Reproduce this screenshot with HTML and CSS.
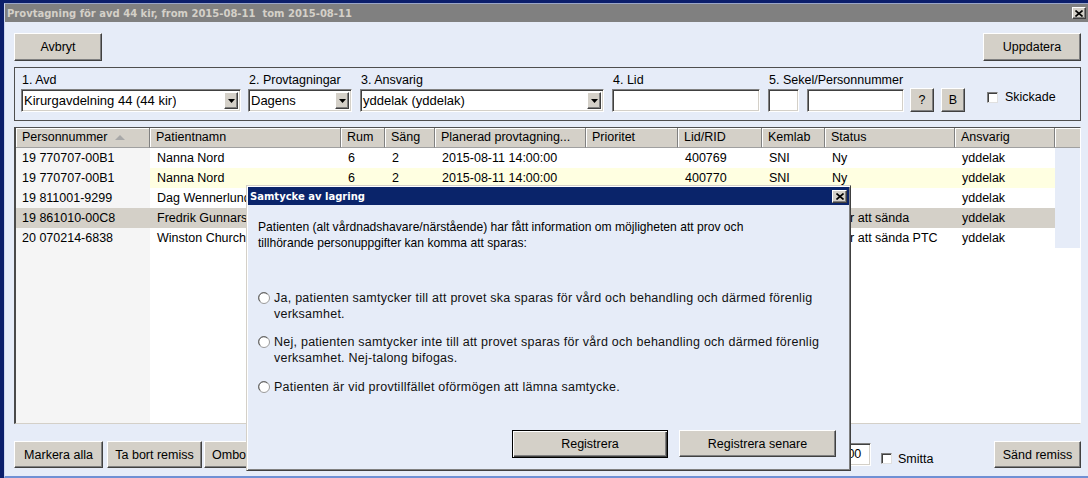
FILE: index.html
```html
<!DOCTYPE html>
<html lang="sv">
<head>
<meta charset="utf-8">
<title>Provtagning</title>
<link rel="stylesheet" href="styles.css">
</head>
<body>
<div class="window">
  <div class="titlebar">
    <span class="title">Provtagning för avd 44 kir, from 2015-08-11  tom 2015-08-11</span>
    <span class="xbtn"><svg width="8" height="7" viewBox="0 0 8 7"><path d="M0.5 0.5L7.5 6.5M7.5 0.5L0.5 6.5" stroke="#000" stroke-width="1.6"/></svg></span>
  </div>
  <div class="content">
    <div class="toolbar">
      <button class="btn btn-avbryt">Avbryt</button>
      <button class="btn btn-upd">Uppdatera</button>
    </div>

    <div class="filters">
      <div class="field f1">
        <div class="lbl">1. Avd</div>
        <div class="select sunken"><span class="val">Kirurgavdelning 44 (44 kir)</span><span class="arrow"><svg width="7" height="4" viewBox="0 0 7 4"><polygon points="0,0 7,0 3.5,4" fill="#000"/></svg></span></div>
      </div>
      <div class="field f2">
        <div class="lbl">2. Provtagningar</div>
        <div class="select sunken"><span class="val">Dagens</span><span class="arrow"><svg width="7" height="4" viewBox="0 0 7 4"><polygon points="0,0 7,0 3.5,4" fill="#000"/></svg></span></div>
      </div>
      <div class="field f3">
        <div class="lbl">3. Ansvarig</div>
        <div class="select sunken"><span class="val">yddelak (yddelak)</span><span class="arrow"><svg width="7" height="4" viewBox="0 0 7 4"><polygon points="0,0 7,0 3.5,4" fill="#000"/></svg></span></div>
      </div>
      <div class="field f4">
        <div class="lbl">4. Lid</div>
        <div class="input sunken"></div>
      </div>
      <div class="field f5">
        <div class="lbl">5. Sekel/Personnummer</div>
        <div class="ctrls">
          <div class="input sunken sekel"></div>
          <div class="input sunken pnr"></div>
          <button class="btn sq q">?</button>
          <button class="btn sq">B</button>
        </div>
      </div>
      <div class="check skickade"><span class="cbox"></span><span>Skickade</span></div>
    </div>

    <div class="grid">
      <div class="row head">
        <div class="hc">Personnummer<svg class="sort" width="10" height="5" viewBox="0 0 10 5"><polygon points="0,5 5,0 10,5" fill="#a8a8a8"/></svg></div>
        <div class="hc">Patientnamn</div>
        <div class="hc">Rum</div>
        <div class="hc">Säng</div>
        <div class="hc">Planerad provtagning...</div>
        <div class="hc">Prioritet</div>
        <div class="hc">Lid/RID</div>
        <div class="hc">Kemlab</div>
        <div class="hc">Status</div>
        <div class="hc">Ansvarig</div>
        <div class="hc last"></div>
      </div>
      <div class="body">
        <div class="row">
          <div class="c first">19 770707-00B1</div><div class="c">Nanna Nord</div><div class="c">6</div><div class="c">2</div><div class="c">2015-08-11 14:00:00</div><div class="c"></div><div class="c">400769</div><div class="c">SNI</div><div class="c">Ny</div><div class="c">yddelak</div><div class="c fill"></div>
        </div>
        <div class="row hl">
          <div class="c first">19 770707-00B1</div><div class="c">Nanna Nord</div><div class="c">6</div><div class="c">2</div><div class="c">2015-08-11 14:00:00</div><div class="c"></div><div class="c">400770</div><div class="c">SNI</div><div class="c">Ny</div><div class="c">yddelak</div><div class="c fill"></div>
        </div>
        <div class="row">
          <div class="c first">19 811001-9299</div><div class="c">Dag Wennerlund</div><div class="c">6</div><div class="c">3</div><div class="c">2015-08-11 14:00:00</div><div class="c"></div><div class="c">400771</div><div class="c">SNI</div><div class="c">Ny</div><div class="c">yddelak</div><div class="c fill"></div>
        </div>
        <div class="row sel">
          <div class="c first">19 861010-00C8</div><div class="c">Fredrik Gunnarsson</div><div class="c">7</div><div class="c">1</div><div class="c">2015-08-11 14:00:00</div><div class="c"></div><div class="c">400772</div><div class="c">SNI</div><div class="c">Klar att sända</div><div class="c">yddelak</div><div class="c fill"></div>
        </div>
        <div class="row">
          <div class="c first">20 070214-6838</div><div class="c">Winston Churchill</div><div class="c">7</div><div class="c">2</div><div class="c">2015-08-11 14:00:00</div><div class="c"></div><div class="c">400773</div><div class="c">SNI</div><div class="c">Klar att sända PTC</div><div class="c">yddelak</div><div class="c fill"></div>
        </div>
      </div>
    </div>

    <div class="bottombar">
      <button class="btn b-mark">Markera alla</button>
      <button class="btn b-tabort">Ta bort remiss</button>
      <button class="btn b-omb">Omboka remiss</button>
      <div class="input sunken time">14:00</div>
      <div class="check smitta"><span class="cbox"></span><span>Smitta</span></div>
      <button class="btn b-sand">Sänd remiss</button>
    </div>
  </div>

  <div class="dialog">
    <div class="dtitle">
      <span class="dtext">Samtycke av lagring</span>
      <span class="xbtn dx"><svg width="8" height="7" viewBox="0 0 8 7"><path d="M0.5 0.5L7.5 6.5M7.5 0.5L0.5 6.5" stroke="#000" stroke-width="1.6"/></svg></span>
    </div>
    <div class="dbody">
      <p class="intro">Patienten (alt vårdnadshavare/närstående) har fått information om möjligheten att prov och<br>tillhörande personuppgifter kan komma att sparas:</p>
      <div class="radios">
        <div class="radio"><svg class="rb" width="12" height="12" viewBox="0 0 12 12"><circle cx="6" cy="6" r="5.5" fill="#fff" stroke="#9a9a9a"/><path d="M2.2 9.3A4.6 4.6 0 0 1 9.3 2.2" fill="none" stroke="#5a5a5a" stroke-width="1"/></svg><span>Ja, patienten samtycker till att provet ska sparas för vård och behandling och därmed förenlig<br>verksamhet.</span></div>
        <div class="radio"><svg class="rb" width="12" height="12" viewBox="0 0 12 12"><circle cx="6" cy="6" r="5.5" fill="#fff" stroke="#9a9a9a"/><path d="M2.2 9.3A4.6 4.6 0 0 1 9.3 2.2" fill="none" stroke="#5a5a5a" stroke-width="1"/></svg><span>Nej, patienten samtycker inte till att provet sparas för vård och behandling och därmed förenlig<br>verksamhet. Nej-talong bifogas.</span></div>
        <div class="radio"><svg class="rb" width="12" height="12" viewBox="0 0 12 12"><circle cx="6" cy="6" r="5.5" fill="#fff" stroke="#9a9a9a"/><path d="M2.2 9.3A4.6 4.6 0 0 1 9.3 2.2" fill="none" stroke="#5a5a5a" stroke-width="1"/></svg><span>Patienten är vid provtillfället oförmögen att lämna samtycke.</span></div>
      </div>
      <div class="dbtns">
        <button class="btn default b-reg">Registrera</button>
        <button class="btn b-regsen">Registrera senare</button>
      </div>
    </div>
  </div>
</div>
</body>
</html>
```
FILE: styles.css
```css
* { box-sizing: border-box; }
html, body { margin: 0; padding: 0; }
body {
  width: 1088px;
  height: 478px;
  overflow: hidden;
  background: #0b1e6b;
  font-family: "Liberation Sans", Arial, sans-serif;
  font-size: 12.5px;
  color: #000;
}
.window {
  position: relative;
  margin: 3px 0 0 4px;
  height: 475px;
  background: #e6ecf8;
  border-left: 1px solid #cdd6ee;
  border-top: 1px solid #9aa6c8;
  border-bottom: 2px solid #7090d4;
  display: flex;
  flex-direction: column;
}
.titlebar {
  height: 18px;
  background: #808080;
  display: flex;
  align-items: center;
  padding-left: 2px;
  flex-shrink: 0;
}
.title, .dtext {
  font-family: "DejaVu Sans", Verdana, sans-serif;
  font-weight: bold;
  font-size: 10px;
  white-space: pre;
}
.title { color: #d4d0c8; }
.xbtn {
  margin-left: auto;
  margin-right: 2px;
  width: 14px;
  height: 12px;
  background: #d4d0c8;
  border: 1px solid;
  border-color: #fff #404040 #404040 #fff;
  box-shadow: inset -1px -1px 0 #808080;
  display: flex;
  align-items: center;
  justify-content: center;
}
.content {
  flex: 1;
  display: flex;
  flex-direction: column;
  padding: 11px 7px 0 9px;
}
.btn {
  font: inherit;
  color: #000;
  background: #d4d0c8;
  border: 1px solid;
  border-color: #fff #404040 #404040 #fff;
  box-shadow: inset -1px -1px 0 #808080;
  padding: 0;
  margin: 0;
  display: flex;
  align-items: center;
  justify-content: center;
  white-space: nowrap;
}
.toolbar {
  display: flex;
  justify-content: space-between;
  height: 28px;
  flex-shrink: 0;
}
.btn-avbryt { width: 88px; }
.btn-upd { width: 98px; }

.filters {
  margin-top: 6px;
  height: 54px;
  flex-shrink: 0;
  border: 1px solid #4e4e4e;
  padding: 4px 0 0 6px;
  display: flex;
  align-items: flex-start;
}
.field { display: flex; flex-direction: column; }
.lbl { height: 16px; line-height: 16px; margin-bottom: 1px; padding-left: 1px; white-space: nowrap; }
.f1 { width: 220px; margin-right: 7px; }
.f2 { width: 104px; margin-right: 8px; }
.f3 { width: 244px; margin-right: 8px; }
.f4 { width: 148px; margin-right: 8px; }
.sunken {
  background: #fff;
  border: 1px solid;
  border-color: #808080 #fff #fff #808080;
  box-shadow: inset 1px 1px 0 #404040, inset -1px -1px 0 #d4d0c8;
}
.select, .input { height: 23px; }
.select { display: flex; }
.val { padding-left: 2px; line-height: 21px; font-size: 13px; white-space: nowrap; overflow: hidden; }
.arrow {
  margin: 2px 2px 2px auto;
  width: 14px;
  background: #d4d0c8;
  border: 1px solid;
  border-color: #fff #404040 #404040 #fff;
  box-shadow: inset -1px -1px 0 #808080;
  display: flex;
  align-items: center;
  justify-content: center;
  flex-shrink: 0;
}
.ctrls { display: flex; align-items: center; }
.sekel { width: 31px; margin-right: 8px; }
.pnr { width: 97px; margin-right: 6px; }
.sq { width: 24px; height: 24px; margin-top: -1px; }
.q { margin-right: 7px; }

.check { display: flex; align-items: center; white-space: nowrap; }
.cbox {
  width: 11px;
  height: 11px;
  background: #fff;
  border: 1px solid;
  border-color: #808080 #e0e0e0 #e0e0e0 #808080;
  box-shadow: inset 1px 1px 0 #404040;
  margin-right: 6px;
  flex-shrink: 0;
}
.skickade { margin-left: 22px; margin-top: 19px; height: 12px; }
.skickade .cbox { margin-right: 7px; }

.grid {
  margin-top: 6px;
  height: 297px;
  flex-shrink: 0;
  display: flex;
  flex-direction: column;
  border-top: 1px solid #505050;
  border-left: 2px solid #4a4a4a;
  border-right: 1px solid #fff;
  border-bottom: 1px solid #d4d0c8;
  overflow: hidden;
}
.row {
  display: grid;
  grid-template-columns: 134px 191px 44px 50px 151px 92px 84px 63px 130px 100px 1fr;
  height: 20px;
  flex-shrink: 0;
}
.head .hc {
  background: #d4d0c8;
  border-right: 1px solid #808080;
  border-bottom: 1px solid #a0a0a0;
  box-shadow: inset 1px 1px 0 #fff;
  padding-left: 6px;
  line-height: 19px;
  white-space: nowrap;
  overflow: hidden;
  display: flex;
  align-items: center;
}
.head .hc.last { border-right: none; }
.sort { margin-left: 8px; }
.body {
  flex: 1;
  background: linear-gradient(to right, #f5f5f5 134px, #fff 134px);
}
.c {
  padding-left: 7px;
  line-height: 20px;
  white-space: nowrap;
  overflow: hidden;
  background: #fff;
}
.c.first { background: #f5f5f5; padding-left: 6px; }
.c.fill { background: #e6ecf8; }
.hl .c { background: #ffffe1; }
.hl .c.first { background: #f5f5f5; }
.hl .c.fill, .sel .c.fill { background: #e6ecf8; }
.sel .c { background: #d4d0c8; }

.bottombar {
  margin-top: 17px;
  height: 27px;
  display: flex;
  align-items: stretch;
  flex-shrink: 0;
}
.b-mark { width: 89px; margin-right: 4px; }
.b-tabort { width: 95px; margin-right: 2px; }
.b-omb { padding: 0 7px; }
.time {
  margin-left: auto;
  width: 45px;
  height: 23px;
  align-self: center;
  padding-left: 3px;
  line-height: 21px;
}
.smitta {
  margin-left: 10px;
  align-self: flex-end;
  margin-bottom: 4px;
  height: 11px;
  width: 113px;
}
.b-sand { width: 87px; }

.dialog {
  position: absolute;
  left: 241px;
  top: 181px;
  width: 605px;
  height: 286px;
  background: #e6ecf8;
  border: 1px solid;
  border-color: #d4d0c8 #404040 #404040 #d4d0c8;
  box-shadow: inset 1px 1px 0 #fff, inset -1px -1px 0 #808080;
  padding: 1px;
  display: flex;
  flex-direction: column;
}
.dtitle {
  height: 18px;
  background: #0a246a;
  display: flex;
  align-items: center;
  padding-left: 2px;
  flex-shrink: 0;
}
.dtext { color: #fff; }
.dx { width: 15px; height: 13px; }
.dbody {
  flex: 1;
  display: flex;
  flex-direction: column;
  padding: 14px 13px 11px 10px;
}
.intro { margin: 0; line-height: 16px; font-size: 12.1px; white-space: nowrap; }
.radios { margin-top: 39px; }
.radio { display: flex; align-items: flex-start; line-height: 16px; letter-spacing: 0.25px; white-space: nowrap; color: #111; }
.radio + .radio { margin-top: 12px; }
.radio:last-child { margin-top: 13px; }
.rb { margin-top: 2px; margin-right: 4px; flex-shrink: 0; }
.dbtns {
  margin-top: auto;
  display: flex;
  justify-content: flex-end;
  align-items: flex-start;
}
.btn.default {
  border: 1px solid #000;
  box-shadow: inset 1px 1px 0 #fff, inset -1px -1px 0 #404040, inset -2px -2px 0 #808080;
}
.b-reg { width: 156px; height: 28px; margin-right: 11px; }
.b-regsen { width: 157px; height: 27px; }
```
